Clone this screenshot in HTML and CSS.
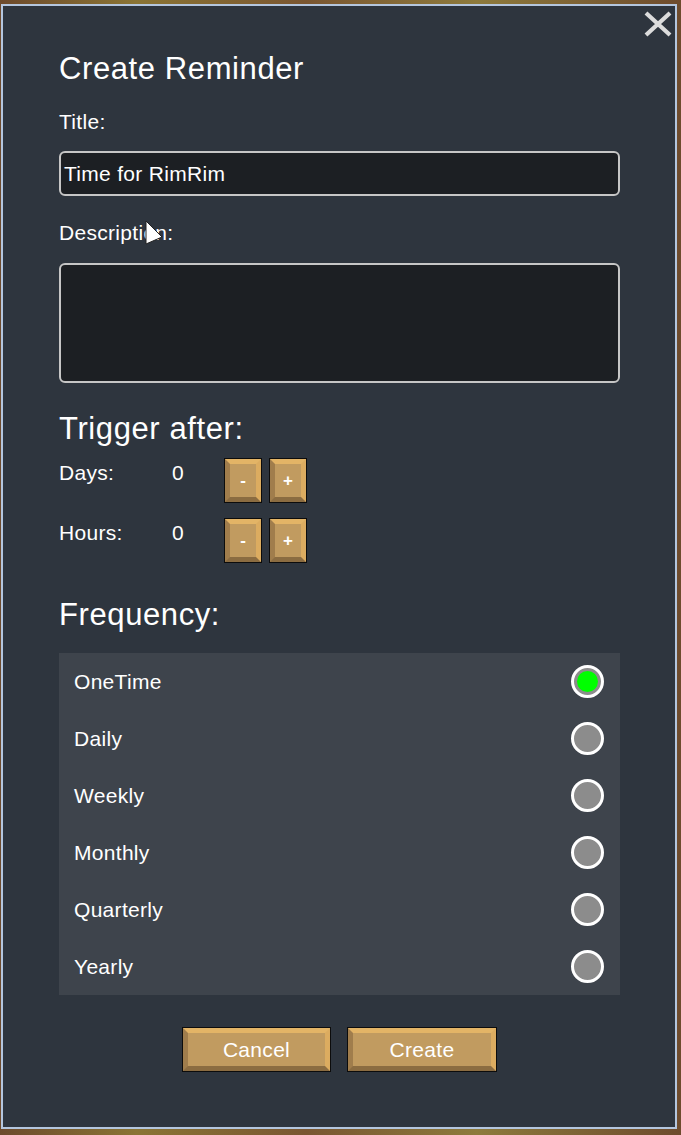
FILE: index.html
```html
<!DOCTYPE html>
<html lang="en">
<head>
<meta charset="utf-8">
<title>Create Reminder</title>
<link rel="stylesheet" href="styles.css">
</head>
<body>
<div class="dialog">
  <button class="close" aria-label="Close">
    <svg width="28" height="26" viewBox="0 0 28 26"><path d="M2 2 L26 24 M26 2 L2 24" stroke="#dcdcdc" stroke-width="4.2" fill="none"/></svg>
  </button>
  <h1 class="heading">Create Reminder</h1>
  <div class="label">Title:</div>
  <div class="field">Time for RimRim</div>
  <div class="label label-desc">Description:</div>
  <div class="field field-area"></div>
  <h2 class="heading heading-trigger">Trigger after:</h2>
  <div class="counter">
    <span class="counter-label">Days:</span>
    <span class="counter-value">0</span>
    <button class="bevel small"><span class="face">-</span></button>
    <button class="bevel small"><span class="face">+</span></button>
  </div>
  <div class="counter counter-second">
    <span class="counter-label">Hours:</span>
    <span class="counter-value">0</span>
    <button class="bevel small"><span class="face">-</span></button>
    <button class="bevel small"><span class="face">+</span></button>
  </div>
  <h2 class="heading heading-freq">Frequency:</h2>
  <ul class="freq-list">
    <li class="freq-row"><span>OneTime</span><span class="radio selected"></span></li>
    <li class="freq-row"><span>Daily</span><span class="radio"></span></li>
    <li class="freq-row"><span>Weekly</span><span class="radio"></span></li>
    <li class="freq-row"><span>Monthly</span><span class="radio"></span></li>
    <li class="freq-row"><span>Quarterly</span><span class="radio"></span></li>
    <li class="freq-row"><span>Yearly</span><span class="radio"></span></li>
  </ul>
  <div class="actions">
    <button class="bevel big cancel"><span class="face">Cancel</span></button>
    <button class="bevel big create"><span class="face">Create</span></button>
  </div>
  <svg class="cursor" width="20" height="26" viewBox="0 0 20 26"><path d="M1 1 L1 24 L17 17 Z" fill="#ffffff" stroke="#222" stroke-width="1"/></svg>
</div>
</body>
</html>
```

FILE: styles.css
```css
* { box-sizing: border-box; }

html, body {
  margin: 0;
  padding: 0;
}

body {
  width: 681px;
  height: 1135px;
  overflow: hidden;
  background: linear-gradient(90deg, #6d4a2c 0%, #8a7434 20%, #7a5631 45%, #8d7a3c 70%, #6e4b2d 100%);
  font-family: "Liberation Sans", Arial, sans-serif;
  color: #ffffff;
  padding-top: 4px;
  padding-left: 1px;
}

.dialog {
  position: relative;
  width: 676px;
  height: 1125px;
  border: 2px solid #b4c6de;
  background: #2e353e;
  padding: 45px 55px 0 56px;
}

.close {
  position: absolute;
  top: 5px;
  right: 3px;
  width: 28px;
  height: 26px;
  padding: 0;
  border: 0;
  background: transparent;
  display: block;
}
.close svg { display: block; }

.heading {
  margin: 0;
  font-size: 31px;
  letter-spacing: 0.6px;
  line-height: 36px;
  font-weight: normal;
  color: #ffffff;
}

.label {
  margin-top: 23px;
  font-size: 21px;
  letter-spacing: 0.3px;
  line-height: 24px;
}

.label-desc { margin-top: 25px; }

.field {
  margin-top: 17px;
  height: 45px;
  border: 2px solid #c6c6c6;
  border-radius: 6px;
  background: #1c1f23;
  font-size: 21px;
  letter-spacing: 0.3px;
  line-height: 24px;
  padding-left: 3px;
  display: flex;
  align-items: center;
}

.field-area {
  margin-top: 18px;
  height: 120px;
}

.heading-trigger { margin-top: 28px; }

.counter {
  margin-top: 11px;
  height: 45px;
  display: flex;
  align-items: flex-start;
}

.counter-second { margin-top: 15px; }

.counter-label,
.counter-value {
  font-size: 21px;
  letter-spacing: 0.3px;
  line-height: 24px;
  padding-top: 3px;
}

.counter-label { width: 113px; }
.counter-value { width: 52px; }

.bevel {
  padding: 0;
  border: 1px solid #0c0c0c;
  background: #c09a5f;
  font-family: "Liberation Sans", Arial, sans-serif;
  color: #ffffff;
  display: block;
}

.bevel .face {
  display: flex;
  align-items: center;
  justify-content: center;
  width: 100%;
  height: 100%;
  border-style: solid;
  border-width: 5px;
  border-top-color: #e3b466;
  border-right-color: #dcac60;
  border-bottom-color: #8b6c41;
  border-left-color: #a07d4c;
  background: #c19b60;
}

.small {
  width: 38px;
  height: 45px;
  margin-right: 7px;
}

.small .face {
  font-size: 17px;
  font-weight: bold;
  line-height: 20px;
}

.heading-freq { margin-top: 34px; }

.freq-list {
  list-style: none;
  margin: 20px 0 0 0;
  padding: 0;
  background: #3e444c;
}

.freq-row {
  height: 57px;
  display: flex;
  align-items: center;
  justify-content: space-between;
  padding: 0 16px 0 15px;
  font-size: 21px;
  letter-spacing: 0.3px;
  line-height: 24px;
}

.radio {
  position: relative;
  width: 33px;
  height: 33px;
  border: 3px solid #ffffff;
  border-radius: 50%;
  background: #8c8c8c;
}

.radio.selected::after {
  content: "";
  position: absolute;
  left: 3px;
  top: 3px;
  width: 21px;
  height: 21px;
  border-radius: 50%;
  background: #00ff00;
}

.actions {
  margin-top: 32px;
  display: flex;
  justify-content: center;
  gap: 16px;
}

.big {
  height: 45px;
}

.big .face {
  font-size: 21px;
  letter-spacing: 0.3px;
  line-height: 24px;
}

.cancel { width: 149px; }
.create { width: 150px; }

.cursor {
  position: absolute;
  left: 142px;
  top: 214px;
}
```
